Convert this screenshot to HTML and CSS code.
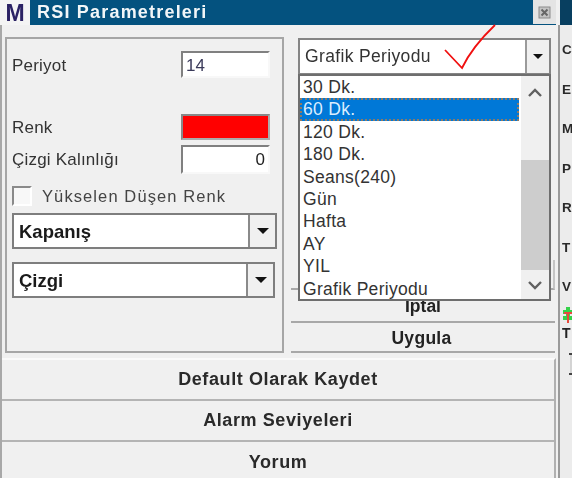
FILE: index.html
```html
<!DOCTYPE html>
<html>
<head>
    <meta charset="UTF-8">
    <title>RSI Parametreleri</title>
    <link rel="stylesheet" href="styles.css">
</head>
<body>
    <div class="Screen">
        <div class="Dialog">
            <div class="TitleBar">
                <div class="AppIcon">M</div>
                <div class="TitleText">RSI Parametreleri</div>
                <div class="CloseBox">
                    <svg width="13" height="13" viewBox="0 0 13 13"><rect x="1" y="1" width="11" height="11" fill="#c4c4c4" stroke="#8a8a8a"/><path d="M3.5 3.5l6 6M9.5 3.5l-6 6" stroke="#666" stroke-width="2"/></svg>
                </div>
            </div>

            <div class="Content">
                <div class="ParamBox">
                    <div class="Row RowPeriod">
                        <label>Periyot</label>
                        <div class="Field">14</div>
                    </div>
                    <div class="Row RowColor">
                        <label>Renk</label>
                        <div class="Swatch"></div>
                    </div>
                    <div class="Row RowWidth">
                        <label>Çizgi Kalınlığı</label>
                        <div class="Field FieldNumber">0</div>
                    </div>
                    <div class="CheckRow">
                        <span class="CheckBox"></span>
                        <label>Yükselen Düşen Renk</label>
                    </div>
                    <div class="Select SelectFirst">
                        <span>Kapanış</span>
                        <div class="SelectArrow"><i class="Caret"></i></div>
                    </div>
                    <div class="Select SelectSecond">
                        <span>Çizgi</span>
                        <div class="SelectArrow"><i class="Caret"></i></div>
                    </div>
                </div>

                <div class="SideColumn">
                    <div class="Combo">
                        <span>Grafik Periyodu</span>
                        <div class="ComboArrow"><i class="Caret CaretSmall"></i></div>
                    </div>
                    <div class="SideButtons">
                        <button class="SideBtn SideBtnHidden"></button>
                        <button class="SideBtn SideBtnCancel">İptal</button>
                        <button class="SideBtn SideBtnApply">Uygula</button>
                    </div>

                    <!-- open dropdown lies over the buttons -->
                    <div class="DropList">
                        <ul>
                            <li>30 Dk.</li>
                            <li class="Selected">60 Dk.</li>
                            <li>120 Dk.</li>
                            <li>180 Dk.</li>
                            <li>Seans(240)</li>
                            <li>Gün</li>
                            <li>Hafta</li>
                            <li>AY</li>
                            <li>YIL</li>
                            <li>Grafik Periyodu</li>
                        </ul>
                        <div class="ScrollBar">
                            <svg class="ScrollUp" width="16" height="10" viewBox="0 0 16 10"><path d="M2 8l6-6 6 6" fill="none" stroke="#606060" stroke-width="2.4"/></svg>
                            <div class="ScrollThumb"></div>
                            <svg class="ScrollDown" width="16" height="10" viewBox="0 0 16 10"><path d="M2 2l6 6 6-6" fill="none" stroke="#606060" stroke-width="2.4"/></svg>
                        </div>
                    </div>
                </div>
            </div>

            <div class="BottomButtons">
                <button class="WideBtn">Default Olarak Kaydet</button>
                <button class="WideBtn">Alarm Seviyeleri</button>
                <button class="WideBtn WideBtnLast">Yorum</button>
            </div>
        </div>

        <div class="BehindStrip">
            <div class="BehindTitle"></div>
            <div class="BehindBody">
                <div class="BehindLetters">
                    <span>C</span><span>E</span><span>M</span><span>P</span><span>R</span><span>T</span><span>V</span>
                </div>
                <svg class="BehindMark" width="12" height="16" viewBox="0 0 12 16"><path d="M4 0h4v3h3v4H8v2h3v4H1V9h3V7H1V3h3z" fill="#35d24a"/><path d="M2 6h8M6 6v10" stroke="#e84a3c" stroke-width="2" fill="none"/></svg>
                <div class="BehindLast">T</div>
                <svg class="BehindCursor" width="10" height="26" viewBox="0 0 10 26"><path d="M6 2h4M6 22h4" stroke="#444" stroke-width="2"/><path d="M8 3v18" stroke="#bbb" stroke-width="1"/></svg>
            </div>
        </div>

        <!-- hand drawn check mark on top of the screenshot -->
        <svg class="CheckMark" width="60" height="52" viewBox="0 0 60 52"><path d="M3 27L20 45Q30 24 53 2" fill="none" stroke="#f01010" stroke-width="1.8"/></svg>
    </div>
</body>
</html>
```

FILE: styles.css
```css
* {
    box-sizing: border-box;
}

html, body {
    margin: 0;
    padding: 0;
    overflow: hidden;
}

body {
    width: 572px;
    height: 478px;
    background: #f0f0f0;
    font-family: "Liberation Sans", Arial, sans-serif;
    color: #222;
}

.Screen {
    display: flex;
    width: 572px;
    height: 478px;
    position: relative;
    overflow: hidden;
    filter: blur(0.5px);
}

.Dialog {
    width: 556px;
    height: 478px;
    display: flex;
    flex-direction: column;
    border-left: 2px solid #a8a8a8;
    flex: none;
}

/* title bar */
.TitleBar {
    height: 25px;
    margin-left: -2px;
    display: flex;
    align-items: center;
    background: #04527f;
    flex: none;
}

.AppIcon {
    width: 30px;
    height: 25px;
    background: #f4f4f4;
    color: #2b2264;
    font-weight: 700;
    font-size: 23px;
    text-align: center;
    line-height: 27px;
}

.TitleText {
    flex: 1;
    margin-left: 7px;
    color: #f2f6f8;
    font-weight: 700;
    font-size: 18px;
    letter-spacing: 1.2px;
}

.CloseBox {
    width: 23px;
    height: 24px;
    background: #e4e4e4;
    display: flex;
    align-items: center;
    justify-content: center;
    margin-bottom: 1px;
}

.Content {
    height: 332px;
    display: flex;
    padding-top: 12px;
    flex: none;
}

/* left box */
.ParamBox {
    width: 279px;
    height: 316px;
    margin-left: 3px;
    border: 2px solid #a6a6a6;
    padding: 12px 0 0 5px;
    flex: none;
    font-size: 17px;
}

.Row {
    display: flex;
    align-items: center;
    justify-content: space-between;
    width: 258px;
}

.Row label {
    color: #333;
    letter-spacing: 0.2px;
}

.RowPeriod {
    height: 27px;
}

.RowPeriod label,
.RowColor label {
    padding-top: 2px;
}

.RowColor {
    height: 26px;
    margin-top: 36px;
}

.RowWidth {
    height: 29px;
    margin-top: 5px;
}

.Field {
    width: 89px;
    height: 100%;
    background: #fff;
    border: 2px solid #f8f8f8;
    border-top-color: #808080;
    border-left-color: #808080;
    padding: 0 3px;
    line-height: 26px;
    font-size: 17px;
    color: #3a3a5a;
}

.FieldNumber {
    text-align: right;
    color: #222;
}

.Swatch {
    width: 89px;
    height: 100%;
    background: #ff0000;
    border: 2px solid #888;
    border-bottom-color: #aaa;
    border-right-color: #aaa;
}

.CheckRow {
    display: flex;
    align-items: center;
    height: 20px;
    margin-top: 12px;
}

.CheckBox {
    width: 20px;
    height: 20px;
    background: #f8f8f8;
    border: 2px solid #fff;
    border-top-color: #8a8a8a;
    border-left-color: #8a8a8a;
}

.CheckRow label {
    margin-left: 10px;
    color: #444;
    font-size: 16.5px;
    letter-spacing: 1.1px;
}

.Select {
    display: flex;
    align-items: center;
    height: 36px;
    background: #fff;
    border: 2px solid #7e7e7e;
    font-weight: 700;
    font-size: 18.5px;
    line-height: 36px;
    color: #1a1a1a;
}

.Select span {
    flex: 1;
    padding-left: 5px;
    padding-top: 2px;
}

.SelectFirst {
    width: 265px;
    margin-top: 7px;
}

.SelectSecond {
    width: 263px;
    margin-top: 13px;
}

.SelectArrow {
    width: 27px;
    height: 100%;
    background: #f0f0f0;
    border-left: 2px solid #8a8a8a;
    display: flex;
    align-items: center;
    justify-content: center;
}

.Caret {
    width: 0;
    height: 0;
    border-left: 6px solid transparent;
    border-right: 6px solid transparent;
    border-top: 6px solid #111;
}

.CaretSmall {
    border-left-width: 5px;
    border-right-width: 5px;
    border-top-width: 5px;
}

/* right column */
.SideColumn {
    position: relative;
    width: 264px;
    height: 316px;
    margin-left: 7px;
    flex: none;
}

.Combo {
    display: flex;
    align-items: center;
    width: 253px;
    height: 37px;
    margin: 1px 0 0 7px;
    background: #fff;
    border: 2px solid #858585;
    font-size: 17.5px;
    letter-spacing: 0.35px;
    color: #333;
}

.Combo span {
    flex: 1;
    padding-left: 5px;
}

.ComboArrow {
    width: 24px;
    height: 100%;
    background: #f0f0f0;
    border-left: 2px solid #9a9a9a;
    display: flex;
    align-items: center;
    justify-content: center;
}

.SideButtons {
    display: flex;
    flex-direction: column;
    margin-top: 185px;
}

.SideBtn {
    width: 264px;
    background: #f0f0f0;
    border: none;
    border-bottom: 2px solid #a8a8a8;
    font-family: inherit;
    font-weight: 700;
    font-size: 17.5px;
    color: #222;
    padding: 0;
}

.SideBtnHidden {
    height: 30px;
    border-right: 2px solid #c4c4c4;
}

.SideBtnCancel {
    height: 33px;
    padding-top: 2px;
}

.SideBtnApply {
    height: 30px;
    padding: 2px 3px 0 0;
    letter-spacing: 0.3px;
}

.DropList {
    position: absolute;
    left: 7px;
    top: 37px;
    width: 253px;
    height: 227px;
    display: flex;
    background: #fff;
    border: 2px solid #6e6e6e;
}

.DropList ul {
    flex: 1;
    list-style: none;
    margin: 0;
    padding: 0;
    font-size: 17.5px;
    letter-spacing: 0.3px;
    color: #333;
}

.DropList li {
    height: 22.4px;
    line-height: 22px;
    padding-left: 3px;
    white-space: nowrap;
}

.DropList li.Selected {
    background: #0078d7;
    color: #dbeeff;
    outline: 2px dotted #8c7a66;
    outline-offset: -2px;
}

.ScrollBar {
    width: 28px;
    background: #f0f0f0;
    display: flex;
    flex-direction: column;
    align-items: center;
    margin-left: 2px;
}

.ScrollUp {
    margin-top: 12px;
}

.ScrollThumb {
    width: 100%;
    height: 110px;
    margin-top: 62px;
    background: #cdcdcd;
}

.ScrollDown {
    margin-top: 10px;
}

/* bottom buttons */
.BottomButtons {
    display: flex;
    flex-direction: column;
    flex: 1;
    margin-top: 1px;
    border-top: 2px solid #fafafa;
    border-right: 2px solid #b0b0b0;
}

.WideBtn {
    height: 41px;
    background: #f0f0f0;
    border: none;
    border-bottom: 2px solid #b4b4b4;
    font-family: inherit;
    font-weight: 700;
    font-size: 18px;
    letter-spacing: 0.6px;
    color: #2a2a2a;
    padding: 0;
    flex: none;
}

.WideBtnLast {
    border-bottom: none;
    height: 37px;
    padding-top: 3px;
}

/* the window behind the dialog */
.BehindStrip {
    flex: 1;
    display: flex;
    flex-direction: column;
    padding-left: 2px;
}

.BehindTitle {
    height: 25px;
    margin-left: 2px;
    background: #083f60;
    flex: none;
}

.BehindBody {
    flex: 1;
    border-left: 2px solid #9a9a9a;
    background: #ececec;
}

.BehindLetters {
    display: flex;
    flex-direction: column;
    font-weight: 700;
    font-size: 13.5px;
    line-height: 39.5px;
    color: #2a2a2a;
    padding: 5px 0 0 2px;
}

.BehindLetters span {
    height: 39.5px;
}

.BehindMark {
    display: block;
    margin: 0 0 0 2px;
}

.BehindLast {
    font-weight: 700;
    font-size: 14px;
    line-height: 18px;
    padding-left: 2px;
    margin-top: 1px;
}

.BehindCursor {
    display: block;
    margin: 10px 0 0 3px;
}

.CheckMark {
    position: absolute;
    left: 442px;
    top: 23px;
}
```
